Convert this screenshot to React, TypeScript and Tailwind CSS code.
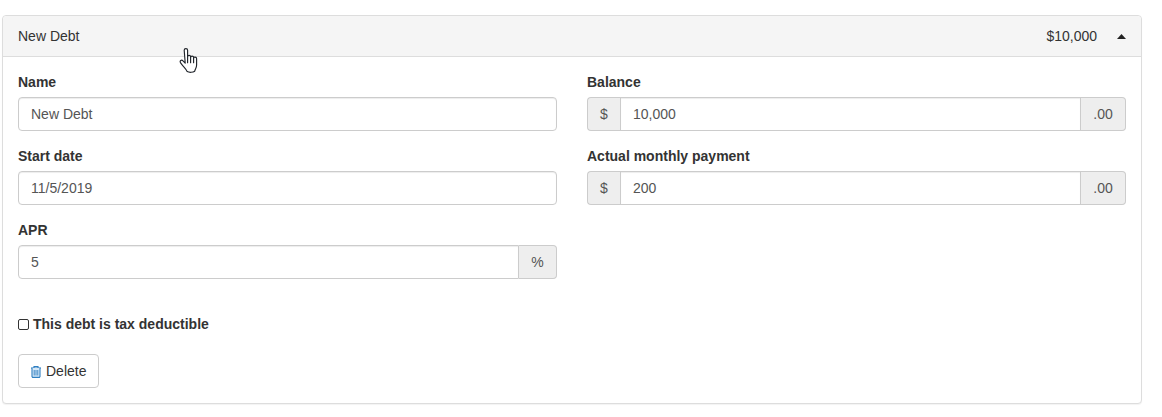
import React from "react";

function Field({ label, value, prefix, suffix }: { label: string; value: string; prefix?: string; suffix?: string }) {
  const addon = "flex items-center justify-center bg-[#eeeeee] border border-[#cccccc] text-[#555555] text-[14px]";
  return (
    <div className="mb-[15px]">
      <div className="mb-[5px] h-5 leading-5 font-bold text-[14px] text-[#333333]">{label}</div>
      <div className="flex h-[34px]">
        {prefix && <div className={`${addon} w-[33px] rounded-l border-r-0`}>{prefix}</div>}
        <div
          className={`flex-1 flex items-center border border-[#cccccc] bg-white px-3 text-[14px] text-[#555555] shadow-[inset_0_1px_1px_rgba(0,0,0,0.075)] ${
            prefix ? "" : "rounded-l"
          } ${suffix ? "" : "rounded-r"}`}
        >
          {value}
        </div>
        {suffix && <div className={`${addon} ${suffix === "%" ? "w-[38px]" : "w-[45px]"} rounded-r border-l-0`}>{suffix}</div>}
      </div>
    </div>
  );
}

function HandCursor() {
  return (
    <svg className="absolute left-[179px] top-[47px] pointer-events-none" width="20" height="28" viewBox="0 0 20 28" fill="white" stroke="#20242a" strokeWidth="1.15" strokeLinejoin="round" strokeLinecap="round">
      <path d="M5.200 3.300c0-2.300 3.400-2.300 3.400 0v6.400c0-1.700 3-1.700 3 0v.6c0-1.600 3-1.600 3 0v.8c0-1.500 3-1.400 3 .4v6.500c0 3.300-1.600 4-1.900 6.200-1.700 1.300-5.500 1.500-7.500.4-1-2.800-3.500-4.300-6.600-8.800-1.300-1.900.9-3.500 2.400-2l2.200 2.300z" />
      <path d="M8.600 9.700v6M11.600 10.300v5.400M14.600 11.100v4.600" fill="none" />
    </svg>
  );
}

function TrashIcon() {
  return (
    <svg className="mr-[4px]" width="12" height="13" viewBox="0 0 12 13" fill="none" stroke="#2f7fc1" strokeWidth="1.100">
      <path d="M1 3h10" />
      <path d="M4 3V1.500h4V3" />
      <path d="M2 3v8.500l.6.900h6.800l.6-.9V3" fill="#d6e8f7" />
      <path d="M4.200 5v5.500M6 5v5.500M7.800 5v5.500" strokeWidth="0.900" />
    </svg>
  );
}

export default function App() {
  return (
    <div className="relative w-[1162px] h-[417px] bg-white font-['Liberation_Sans',Arial,sans-serif] pt-[15px] pl-[2px]">
      <div className="w-[1140px] border border-[#dddddd] rounded bg-white shadow-[0_1px_1px_rgba(0,0,0,0.05)]">
        <div className="h-[41px] flex items-center bg-[#f5f5f5] border-b border-[#dddddd] rounded-t pl-[15px] pr-[15px] text-[14px] text-[#333333]">
          <span className="flex-1">New Debt</span>
          <span>$10,000</span>
          <svg className="ml-[20px]" width="9" height="5" viewBox="0 0 9 5" fill="#222222">
            <path d="M0 5L4.500 0L9 5z" />
          </svg>
        </div>
        <div className="p-[15px]">
          <div className="grid grid-cols-2 gap-x-[30px]">
            <Field label="Name" value="New Debt" />
            <Field label="Balance" value="10,000" prefix="$" suffix=".00" />
            <Field label="Start date" value="11/5/2019" />
            <Field label="Actual monthly payment" value="200" prefix="$" suffix=".00" />
            <Field label="APR" value="5" suffix="%" />
          </div>
          <div className="flex items-center h-5 mt-[20px] mb-[20px] text-[14px] font-bold text-[#333333]">
            <span className="w-[11px] h-[11px] mr-[4px] border border-[#333333] rounded-[2px] bg-white" />
            This debt is tax deductible
          </div>
          <div className="flex items-center justify-start pl-[11px] w-[81px] h-[34px] border border-[#cccccc] rounded bg-white text-[14px] text-[#333333]">
            <TrashIcon />
            Delete
          </div>
        </div>
      </div>
      <HandCursor />
    </div>
  );
}
